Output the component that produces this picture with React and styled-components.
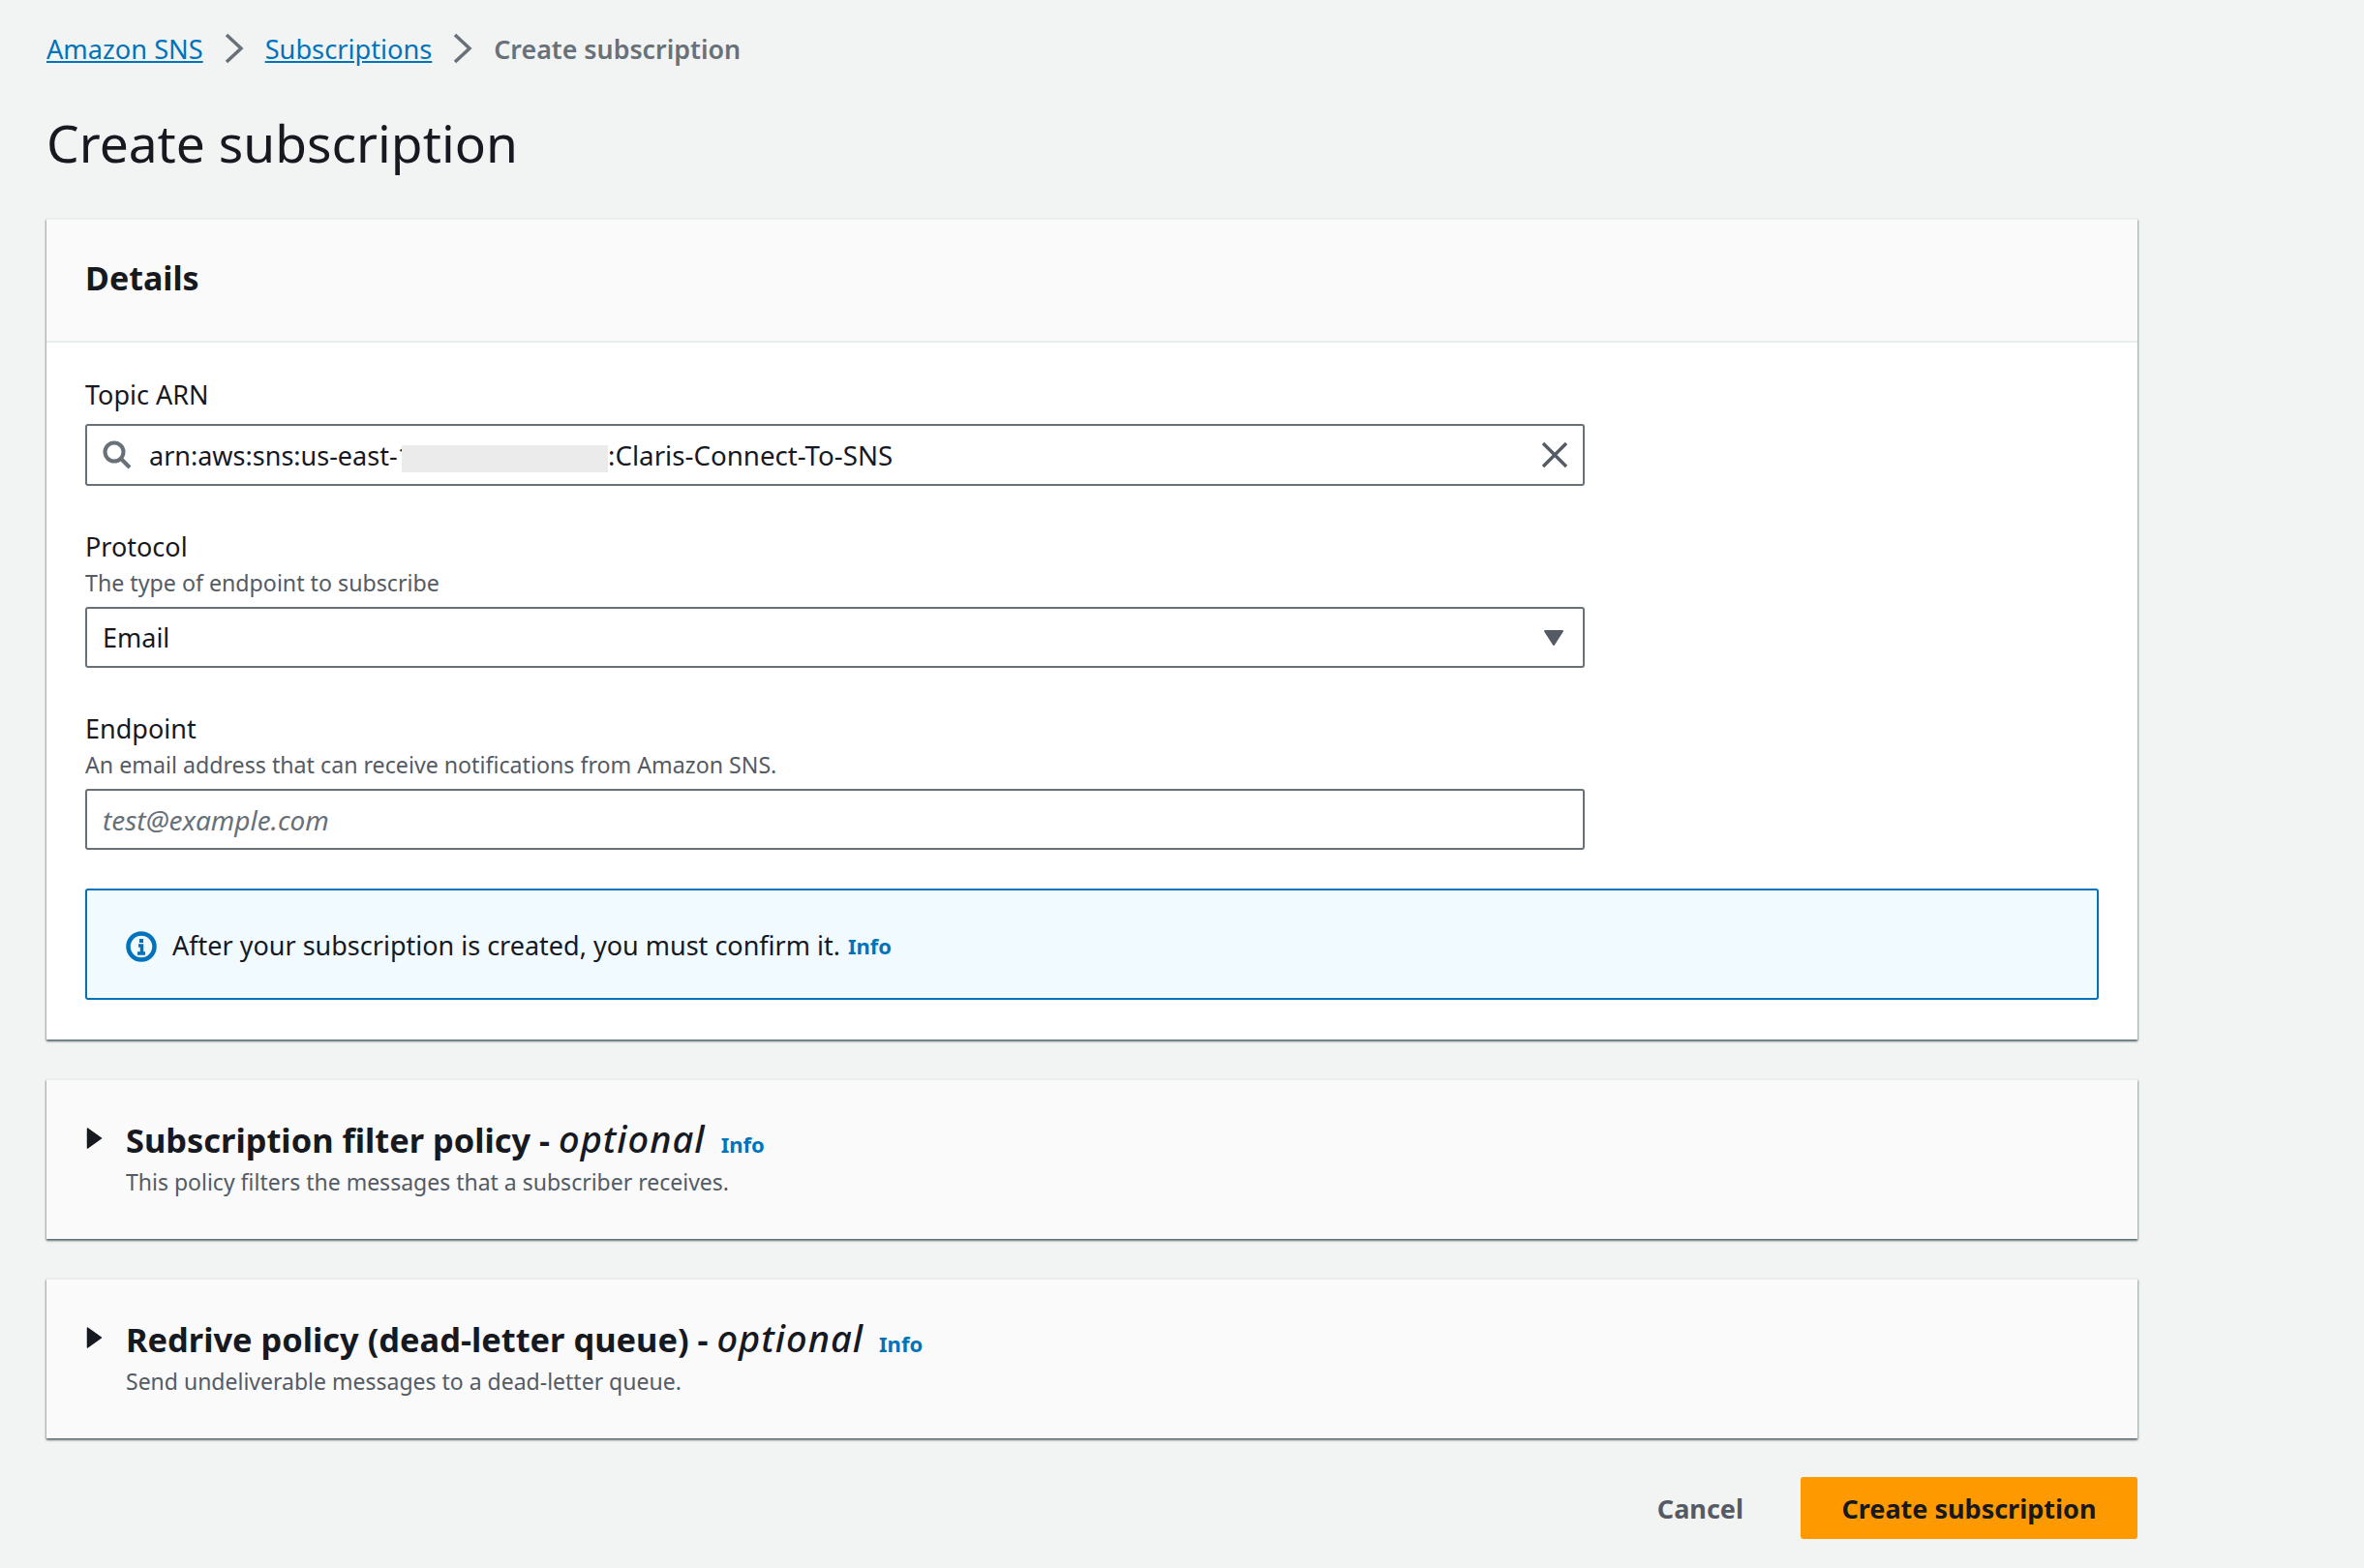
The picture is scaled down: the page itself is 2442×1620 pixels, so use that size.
import React from "react";
import styled, { createGlobalStyle } from "styled-components";

const GlobalStyle = createGlobalStyle`
  html, body {
    margin: 0;
    padding: 0;
    background: #f2f3f3;
  }
  * {
    box-sizing: border-box;
  }
`;

const Page = styled.div`
  font-family: "Noto Sans", "Open Sans", sans-serif;
  color: #16191f;
  width: 2442px;
  height: 1620px;
  padding: 0 234px 0 48px;
  overflow: hidden;
`;

const Breadcrumbs = styled.nav`
  display: flex;
  align-items: center;
  height: 100px;
  font-size: 27.2px;
  gap: 22px;
`;

const CrumbLink = styled.a`
  color: #0073bb;
  text-decoration: underline;
`;

const CrumbCurrent = styled.span`
  color: #687078;
  font-weight: 600;
  font-size: 26.8px;
`;

const Title = styled.h1`
  font-size: 53.3px;
  font-weight: 400;
  line-height: 96px;
  margin: 0 0 30px;
`;

const Panel = styled.section`
  background: ${(p) => (p.$muted ? "#fafafa" : "#fff")};
  border-top: 1px solid #eaeded;
  box-shadow: 0 2px 2px rgba(0, 28, 36, 0.5), 1px 1px 2px rgba(0, 28, 36, 0.2),
    -1px 1px 2px rgba(0, 28, 36, 0.2);
  margin-bottom: 41px;
`;

const PanelHeader = styled.header`
  background: #fafafa;
  border-bottom: 2px solid #eaeded;
  height: 127px;
  padding: 0 40px 6px;
  display: flex;
  align-items: center;
`;

const PanelTitle = styled.h2`
  font-size: 34px;
  font-weight: 700;
  margin: 0;
`;

const PanelBody = styled.div`
  padding: 35px 40px 41px;
`;

const Field = styled.div`
  width: 1549px;
  margin-bottom: ${(p) => (p.$last ? "40px" : "44px")};
`;

const Label = styled.label`
  display: block;
  font-size: 27px;
  line-height: 38px;
`;

const Hint = styled.div`
  font-size: 23.2px;
  line-height: 36px;
  color: #545b64;
`;

const Box = styled.div`
  display: flex;
  align-items: center;
  height: ${(p) => (p.$tight ? "63px" : "64px")};
  margin-top: ${(p) => (p.$tight ? "7px" : "11px")};
  padding: 0 16px;
  background: #fff;
  border: 2px solid #687078;
  border-radius: 3px;
  font-size: 27px;
`;

const BoxText = styled.span`
  flex: 1;
  white-space: nowrap;
`;

const Redaction = styled.span`
  display: inline-block;
  vertical-align: middle;
  width: 213px;
  height: 28px;
  margin-left: -11px;
  background: #ebebeb;
  position: relative;
`;

const ArnSuffix = styled.span`
  font-size: 27.7px;
`;

const EndpointInput = styled.input`
  flex: 1;
  border: 0;
  outline: 0;
  padding: 0;
  background: none;
  font: italic 28px "Noto Sans", sans-serif;
  color: #16191f;
  &::placeholder {
    color: #687078;
    opacity: 1;
  }
`;

const SearchIcon = styled.svg`
  width: 30px;
  height: 30px;
  margin-right: 18px;
  flex: none;
`;

const ClearIcon = styled.svg`
  width: 32px;
  height: 32px;
  margin-right: -3px;
  flex: none;
`;

const SelectCaret = styled.svg`
  width: 22px;
  height: 20px;
  margin-right: 3px;
  flex: none;
`;

const Alert = styled.div`
  display: flex;
  align-items: center;
  height: 115px;
  padding: 2px 40px 0;
  background: #f1faff;
  border: 2px solid #0073bb;
  border-radius: 3px;
  font-size: 27px;
`;

const AlertIcon = styled.svg`
  width: 32px;
  height: 32px;
  margin: 3px 16px 0 0;
  flex: none;
`;

const InfoLink = styled.a`
  color: #0073bb;
  font-weight: 700;
  font-size: 22px;
  font-style: normal;
  margin-left: ${(p) => p.$gap || "8px"};
`;

const ExpandHeader = styled.div`
  height: 164px;
  padding: 37px 40px 0;
  display: grid;
  grid-template-columns: 42px 1fr;
`;

const Caret = styled.svg`
  width: 18px;
  height: 24px;
  margin: 11px 0 0 1px;
`;

const ExpandTitle = styled.h2`
  font-size: 34.4px;
  line-height: 46px;
  font-weight: 700;
  margin: 0;
  & em {
    font-size: 38px;
    font-weight: 500;
    letter-spacing: 1px;
  }
`;

const ExpandHint = styled.div`
  font-size: 23px;
  line-height: 32px;
  color: #545b64;
`;

const Actions = styled.div`
  display: flex;
  justify-content: flex-end;
  align-items: center;
  gap: 59px;
  margin-top: -1px;
`;

const CancelButton = styled.button`
  border: 0;
  background: none;
  padding: 0;
  font: 700 27px "Noto Sans", sans-serif;
  color: #545b64;
`;

const PrimaryButton = styled.button`
  width: 348px;
  height: 64px;
  border: 0;
  border-radius: 3px;
  background: #f90;
  font: 700 27px "Noto Sans", sans-serif;
  color: #16191f;
`;

const Chevron = () => (
  <svg width="20" height="32" viewBox="0 0 20 32" fill="none">
    <path d="M2 2l15 14L2 30" stroke="#687078" strokeWidth="3.5" />
  </svg>
);

const ExpandCaret = () => (
  <Caret viewBox="0 0 18 24">
    <path d="M1.5 2l14 10-14 10z" fill="#16191f" stroke="#16191f" strokeWidth="1.5" strokeLinejoin="round" />
  </Caret>
);

const App = () => {
  return (
    <Page>
      <GlobalStyle />
      <Breadcrumbs>
        <CrumbLink>Amazon SNS</CrumbLink>
        <Chevron />
        <CrumbLink>Subscriptions</CrumbLink>
        <Chevron />
        <CrumbCurrent>Create subscription</CrumbCurrent>
      </Breadcrumbs>
      <Title>Create subscription</Title>

      <Panel>
        <PanelHeader>
          <PanelTitle>Details</PanelTitle>
        </PanelHeader>
        <PanelBody>
          <Field>
            <Label>Topic ARN</Label>
            <Box>
              <SearchIcon viewBox="0 0 30 30" fill="none" stroke="#687078" strokeWidth="4">
                <circle cx="12" cy="12" r="9.5" />
                <path d="M19 19l9 9" />
              </SearchIcon>
              <BoxText>
                arn:aws:sns:us-east-1
                <Redaction />
                <ArnSuffix>:Claris-Connect-To-SNS</ArnSuffix>
              </BoxText>
              <ClearIcon viewBox="0 0 32 32" fill="none">
                <path d="M4 4l24 24M28 4L4 28" stroke="#545b64" strokeWidth="3.4" />
              </ClearIcon>
            </Box>
          </Field>
          <Field>
            <Label>Protocol</Label>
            <Hint>The type of endpoint to subscribe</Hint>
            <Box $tight>
              <BoxText>Email</BoxText>
              <SelectCaret viewBox="0 0 22 20">
                <path d="M2 3h18L11 17z" fill="#545b64" stroke="#545b64" strokeWidth="2" strokeLinejoin="round" />
              </SelectCaret>
            </Box>
          </Field>
          <Field $last>
            <Label>Endpoint</Label>
            <Hint>An email address that can receive notifications from Amazon SNS.</Hint>
            <Box $tight>
              <EndpointInput placeholder="test@example.com" />
            </Box>
          </Field>
          <Alert>
            <AlertIcon viewBox="0 0 32 32" fill="none">
              <circle cx="16" cy="16" r="13.5" stroke="#0073bb" strokeWidth="4.5" />
              <path d="M16 8v4" stroke="#0073bb" strokeWidth="4" />
              <path d="M13 15h3.5v7M12 23h8" stroke="#0073bb" strokeWidth="3.5" />
            </AlertIcon>
            After your subscription is created, you must confirm it.
            <InfoLink>Info</InfoLink>
          </Alert>
        </PanelBody>
      </Panel>

      <Panel $muted>
        <ExpandHeader>
          <ExpandCaret />
          <div>
            <ExpandTitle>
              Subscription filter policy - <em>optional</em>
              <InfoLink $gap="16px">Info</InfoLink>
            </ExpandTitle>
            <ExpandHint>This policy filters the messages that a subscriber receives.</ExpandHint>
          </div>
        </ExpandHeader>
      </Panel>

      <Panel $muted>
        <ExpandHeader>
          <ExpandCaret />
          <div>
            <ExpandTitle>
              Redrive policy (dead-letter queue) - <em>optional</em>
              <InfoLink $gap="16px">Info</InfoLink>
            </ExpandTitle>
            <ExpandHint>Send undeliverable messages to a dead-letter queue.</ExpandHint>
          </div>
        </ExpandHeader>
      </Panel>

      <Actions>
        <CancelButton>Cancel</CancelButton>
        <PrimaryButton>Create subscription</PrimaryButton>
      </Actions>
    </Page>
  );
};

export default App;
